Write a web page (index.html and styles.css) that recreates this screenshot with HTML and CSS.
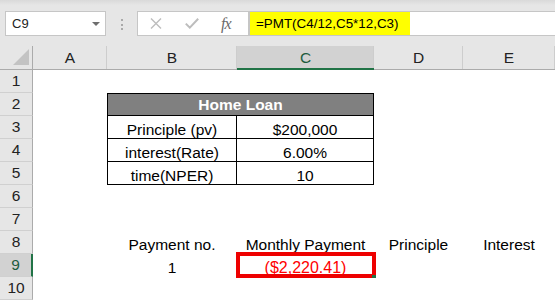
FILE: index.html
```html
<!DOCTYPE html>
<html lang="en">
<head>
    <meta charset="UTF-8">
    <title>PMT - Home Loan</title>
    <link rel="stylesheet" href="styles.css">
</head>
<body>
    <div class="toolbar">
        <div class="name-box">
            <span>C9</span>
            <span class="caret"></span>
        </div>
        <div class="grip"><i></i><i></i><i></i></div>
        <div class="fx-buttons">
            <svg class="btn" width="12" height="11" viewBox="0 0 12 11">
                <path d="M1 0.5 L11 10.5 M11 0.5 L1 10.5" stroke="#bdbdbd" stroke-width="1.4" fill="none"/>
            </svg>
            <svg class="btn" width="14" height="11" viewBox="0 0 14 11">
                <path d="M0.8 5.6 L4.8 9.6 L13.2 0.8" stroke="#bdbdbd" stroke-width="2" fill="none"/>
            </svg>
            <span class="fx">fx</span>
        </div>
        <div class="formula">
            <span class="highlight">=PMT(C4/12,C5*12,C3)</span>
        </div>
    </div>

    <div class="sheet">
        <div class="row head">
            <div class="corner">
                <svg width="16" height="16" viewBox="0 0 16 16"><polygon points="16,0 16,16 0,16" fill="#c3c3c3"/></svg>
            </div>
            <div class="ch">A</div>
            <div class="ch">B</div>
            <div class="ch selected">C</div>
            <div class="ch">D</div>
            <div class="ch">E</div>
        </div>

        <div class="row">
            <div class="rh">1</div>
            <div class="cell"></div><div class="cell"></div><div class="cell"></div><div class="cell"></div><div class="cell"></div>
        </div>
        <div class="row">
            <div class="rh">2</div>
            <div class="cell"></div>
            <div class="cell loan-head">Home Loan</div>
            <div class="cell"></div><div class="cell"></div>
        </div>
        <div class="row">
            <div class="rh">3</div>
            <div class="cell"></div>
            <div class="cell loan-key">Principle (pv)</div>
            <div class="cell loan-val">$200,000</div>
            <div class="cell"></div><div class="cell"></div>
        </div>
        <div class="row">
            <div class="rh">4</div>
            <div class="cell"></div>
            <div class="cell loan-key">interest(Rate)</div>
            <div class="cell loan-val">6.00%</div>
            <div class="cell"></div><div class="cell"></div>
        </div>
        <div class="row">
            <div class="rh">5</div>
            <div class="cell"></div>
            <div class="cell loan-key">time(NPER)</div>
            <div class="cell loan-val">10</div>
            <div class="cell"></div><div class="cell"></div>
        </div>
        <div class="row">
            <div class="rh">6</div>
            <div class="cell"></div><div class="cell"></div><div class="cell"></div><div class="cell"></div><div class="cell"></div>
        </div>
        <div class="row">
            <div class="rh">7</div>
            <div class="cell"></div><div class="cell"></div><div class="cell"></div><div class="cell"></div><div class="cell"></div>
        </div>
        <div class="row">
            <div class="rh">8</div>
            <div class="cell"></div>
            <div class="cell">Payment no.</div>
            <div class="cell">Monthly Payment</div>
            <div class="cell">Principle</div>
            <div class="cell">Interest</div>
        </div>
        <div class="row">
            <div class="rh selected">9</div>
            <div class="cell"></div>
            <div class="cell">1</div>
            <div class="cell pmt">($2,220.41)</div>
            <div class="cell"></div><div class="cell"></div>
        </div>
        <div class="row">
            <div class="rh">10</div>
            <div class="cell"></div><div class="cell"></div><div class="cell"></div><div class="cell"></div><div class="cell"></div>
        </div>
    </div>
</body>
</html>
```

FILE: styles.css
```css
body {
    margin: 0;
    width: 555px;
    height: 302px;
    overflow: hidden;
    background: #fff;
    font-family: 'Liberation Sans', Arial, sans-serif;
    color: #000;
}

/* formula bar */
.toolbar {
    display: flex;
    align-items: flex-start;
    height: 46px;
    box-sizing: border-box;
    padding: 11px 0 0 5px;
    background: linear-gradient(#d9d9d9, #e6e6e6 5px);
}

.name-box {
    width: 101px;
    height: 25px;
    box-sizing: border-box;
    display: flex;
    align-items: center;
    justify-content: space-between;
    padding: 0 5px 0 6px;
    background: #fff;
    border: 1px solid #c6c6c6;
    font-size: 13px;
    color: #222;
}

.caret {
    width: 0;
    height: 0;
    border-left: 4px solid transparent;
    border-right: 4px solid transparent;
    border-top: 4px solid #6e6e6e;
}

.grip {
    width: 31px;
    display: flex;
    flex-direction: column;
    align-items: center;
    gap: 2.5px;
    padding-top: 8px;
}

.grip i {
    width: 2px;
    height: 2px;
    background: #a9a9a9;
}

.fx-buttons {
    width: 112px;
    height: 25px;
    box-sizing: border-box;
    display: flex;
    align-items: center;
    gap: 23px;
    padding-left: 12px;
    background: #fff;
    border: 1px solid #c6c6c6;
}

.fx {
    font-family: 'Liberation Serif', 'Times New Roman', serif;
    font-style: italic;
    font-size: 16px;
    color: #6a6a6a;
    margin-left: -1px;
    letter-spacing: -1px;
}

.formula {
    flex: 1;
    height: 25px;
    box-sizing: border-box;
    background: #fff;
    border: 1px solid #c6c6c6;
    border-right: none;
}

.highlight {
    display: block;
    width: 160px;
    height: 23px;
    box-sizing: border-box;
    padding: 1px 0 0 6px;
    line-height: 22px;
    background: #ffff00;
    font-size: 13.4px;
    white-space: nowrap;
}

/* sheet */
.row {
    display: grid;
    grid-template-columns: 33px 74px 130px 137px 89px 92px;
    height: 23px;
}

.row.head {
    height: 24px;
}

.corner {
    display: flex;
    align-items: flex-end;
    justify-content: flex-end;
    padding: 0 3px 4px 0;
    background: #e6e6e6;
    border-right: 1px solid #ababab;
    border-bottom: 1px solid #ababab;
}

.ch {
    display: flex;
    align-items: center;
    justify-content: center;
    padding-top: 1px;
    box-sizing: border-box;
    background: #e6e6e6;
    border-bottom: 1px solid #ababab;
    box-shadow: inset -1px 0 0 #cdcdcd;
    font-size: 15.5px;
    color: #222;
}

.ch.selected {
    background: #d2d2d2;
    border-bottom: 2px solid #217346;
    color: #1d5d3e;
}

.rh {
    display: flex;
    align-items: center;
    justify-content: center;
    box-sizing: border-box;
    background: #e6e6e6;
    border-right: 1px solid #ababab;
    border-bottom: 1px solid #d0d0d0;
    font-size: 15.5px;
    color: #222;
}

.rh.selected {
    background: #d2d2d2;
    border-right: 2px solid #217346;
    color: #1d5d3e;
}

.cell {
    display: flex;
    align-items: flex-end;
    justify-content: center;
    box-sizing: border-box;
    padding-bottom: 1px;
    line-height: 16px;
    font-size: 15.5px;
    white-space: nowrap;
}

.loan-head {
    grid-column: span 2;
    align-items: center;
    padding: 0;
    background: #808080;
    border: 1px solid #000;
    color: #fff;
    font-weight: bold;
}

.loan-key {
    padding-bottom: 0;
    border: 1px solid #000;
    border-top: none;
}

.loan-val {
    padding-bottom: 0;
    border-right: 1px solid #000;
    border-bottom: 1px solid #000;
}

.pmt {
    position: relative;
    color: #ff0000;
    font-size: 16px;
}

/* drawn highlight box around the result */
.pmt::after {
    content: '';
    position: absolute;
    top: -2px;
    left: -1px;
    right: -2px;
    bottom: -1px;
    border: 4px solid #ee0000;
}

/* fill handle */
.pmt::before {
    content: '';
    position: absolute;
    right: -2px;
    bottom: -1px;
    width: 4px;
    height: 3px;
    background: #217346;
    z-index: 1;
}
```
